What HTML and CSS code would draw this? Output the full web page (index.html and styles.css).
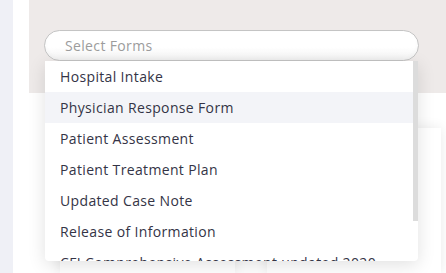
FILE: index.html
```html
<!DOCTYPE html>
<html>
<head>
<meta charset="utf-8">
<link rel="stylesheet" href="styles.css">
</head>
<body>
<div class="app">
  <aside class="sidebar"></aside>
  <main class="main">
    <section class="panel">
      <div class="select">
        <div class="select-input">Select Forms</div>
        <div class="dropdown">
          <ul class="options">
            <li class="option">Hospital Intake</li>
            <li class="option active">Physician Response Form</li>
            <li class="option">Patient Assessment</li>
            <li class="option">Patient Treatment Plan</li>
            <li class="option">Updated Case Note</li>
            <li class="option">Release of Information</li>
            <li class="option">CFI Comprehensive Assessment updated 2020</li>
          </ul>
          <span class="scroll-thumb"></span>
        </div>
      </div>
    </section>
    <section class="cards">
      <div class="card card-left"></div>
      <div class="card card-right"></div>
    </section>
  </main>
</div>
</body>
</html>
```

FILE: styles.css
```css
* { box-sizing: border-box; }
html, body { margin: 0; padding: 0; }
body {
  width: 446px;
  height: 273px;
  overflow: hidden;
  background: #ffffff;
  font-family: "Open Sans", "Noto Sans", sans-serif;
}
.app {
  display: flex;
  height: 273px;
  overflow: hidden;
}
.sidebar {
  width: 13px;
  flex: none;
  background: #eff0f6;
}
.main {
  flex: 1;
  padding-left: 16px;
  display: flex;
  flex-direction: column;
}
.panel {
  height: 93px;
  flex: none;
  background: #eeeae9;
  padding: 30px 27px 0 15px;
  position: relative;
  z-index: 2;
}
.select {
  position: relative;
}
.select-input {
  height: 31px;
  border: 1px solid #c4c4c4;
  border-radius: 16px;
  background: linear-gradient(#ffffff 55%, #f6f6f6);
  box-shadow: inset 0 -2px 4px rgba(0,0,0,0.03);
  padding-left: 20px;
  font-size: 14px;
  line-height: 29px;
  color: #9c9c9c;
  letter-spacing: 0.35px;
}
.dropdown {
  position: absolute;
  left: 1px;
  top: 31px;
  width: 373px;
  height: 200px;
  background: #ffffff;
  overflow: hidden;
  box-shadow: 0 4px 18px rgba(0,0,0,0.12);
  border-radius: 0 0 4px 4px;
}
.options {
  margin: 0;
  padding: 0;
  list-style: none;
}
.scroll-thumb {
  position: absolute;
  right: 0;
  top: 0;
  width: 5px;
  height: 160px;
  background: #dcdcdc;
}
.option {
  height: 31px;
  line-height: 31px;
  padding-left: 15px;
  font-size: 14px;
  color: #343446;
  white-space: nowrap;
  letter-spacing: 0.35px;
}
.option.active {
  background: #f3f4f8;
}
.cards {
  flex: 1;
  display: flex;
  gap: 32px;
  padding: 35px 0 0 31px;
  background: #ffffff;
  min-height: 0;
}
.card {
  background: #ffffff;
  box-shadow: 0 0 12px rgba(0,0,0,0.09);
}
.card-left { width: 175px; }
.card-right { width: 174px; }
```
